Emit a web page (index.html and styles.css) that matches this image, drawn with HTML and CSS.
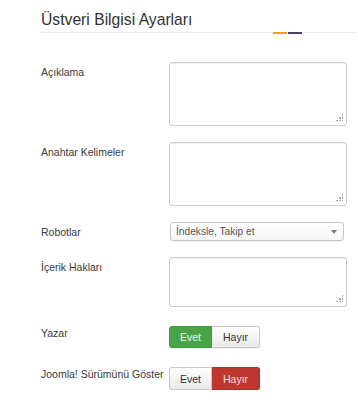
FILE: index.html
```html
<!DOCTYPE html>
<html lang="tr">
<head>
    <meta charset="UTF-8">
    <meta name="viewport" content="width=device-width, initial-scale=1.0">
    <title>Üstveri Bilgisi Ayarları</title>
    <link rel="stylesheet" href="styles.css">
</head>
<body>
    <div class="page">
        <h2 class="page-title">Üstveri Bilgisi Ayarları</h2>

        <div class="form">
            <label class="form-label" for="metaDesc">Açıklama</label>
            <div class="field">
                <textarea id="metaDesc" class="area area-tall"></textarea>
                <span class="grip"></span>
            </div>

            <label class="form-label" for="metaKeys">Anahtar Kelimeler</label>
            <div class="field">
                <textarea id="metaKeys" class="area area-tall"></textarea>
                <span class="grip"></span>
            </div>

            <label class="form-label" for="robots">Robotlar</label>
            <div class="field">
                <div class="select" id="robots">
                    <span>İndeksle, Takip et</span>
                    <span class="caret"></span>
                </div>
            </div>

            <label class="form-label" for="rights">İçerik Hakları</label>
            <div class="field">
                <textarea id="rights" class="area area-short"></textarea>
                <span class="grip"></span>
            </div>

            <span class="form-label">Yazar</span>
            <div class="field field-toggle">
                <div class="toggle">
                    <button class="btn btn-yes active">Evet</button>
                    <button class="btn btn-no">Hayır</button>
                </div>
            </div>

            <span class="form-label">Joomla! Sürümünü Göster</span>
            <div class="field field-toggle">
                <div class="toggle">
                    <button class="btn btn-yes">Evet</button>
                    <button class="btn btn-no active">Hayır</button>
                </div>
            </div>
        </div>
    </div>
</body>
</html>
```

FILE: styles.css
```css
body {
    margin: 0;
    background: #fff;
    font-family: "Liberation Sans", Arial, sans-serif;
    color: #333;
}

.page {
    padding: 0 3px 0 41px;
}

.page-title {
    position: relative;
    margin: 0;
    padding: 10px 0 2px;
    font-size: 15.7px;
    font-weight: normal;
    line-height: 20px;
    color: #333;
    border-bottom: 1px solid #e8e8e8;
}

/* the two small coloured marks on the rule */
.page-title::after {
    content: "";
    position: absolute;
    left: 232px;
    bottom: -2px;
    width: 29px;
    height: 2px;
    background: linear-gradient(to right, #f0a410 0, #f0a410 14px, #fff 14px, #fff 15px, #44446a 15px);
}

.form {
    display: grid;
    grid-template-columns: 128px 1fr;
    row-gap: 16px;
    margin-top: 29px;
}

.form-label {
    padding-top: 3px;
    font-size: 10.5px;
    line-height: 14px;
    color: #3a3a3a;
}

.field {
    position: relative;
}

.field-toggle {
    padding-top: 3px;
}

.area {
    display: block;
    box-sizing: border-box;
    width: 178px;
    margin: 0;
    border: 1px solid #ccc;
    border-radius: 3px;
    box-shadow: inset 0 1px 1px rgba(0,0,0,0.06);
    background: #fff;
    resize: none;
    outline: none;
}

.area-tall {
    height: 64px;
}

.area-short {
    height: 50px;
}

.grip {
    position: absolute;
    left: 167px;
    bottom: 5px;
    width: 7px;
    height: 7px;
    background:
        radial-gradient(circle, #aaa 0.8px, transparent 1px) 6px 0 / 2px 2px no-repeat,
        radial-gradient(circle, #aaa 0.8px, transparent 1px) 6px 3px / 2px 2px no-repeat,
        radial-gradient(circle, #aaa 0.8px, transparent 1px) 6px 6px / 2px 2px no-repeat,
        radial-gradient(circle, #aaa 0.8px, transparent 1px) 3px 3px / 2px 2px no-repeat,
        radial-gradient(circle, #aaa 0.8px, transparent 1px) 3px 6px / 2px 2px no-repeat,
        radial-gradient(circle, #aaa 0.8px, transparent 1px) 0 6px / 2px 2px no-repeat;
}

.select {
    box-sizing: border-box;
    display: flex;
    align-items: center;
    justify-content: space-between;
    width: 174px;
    height: 19px;
    margin-left: 1px;
    padding: 0 6px 0 5px;
    border: 1px solid #c6c6c6;
    border-radius: 3px;
    background: linear-gradient(#fff, #f6f6f6);
    box-shadow: 0 1px 1px rgba(0,0,0,0.05);
    font-size: 10.2px;
    color: #555;
}

.caret {
    width: 0;
    height: 0;
    border-left: 3px solid transparent;
    border-right: 3px solid transparent;
    border-top: 4px solid #777;
}

.toggle {
    display: flex;
}

.btn {
    box-sizing: border-box;
    height: 22px;
    margin: 0;
    padding: 0;
    border: 1px solid #c8c8c8;
    background: linear-gradient(#fff, #e9e9e9);
    font-family: "Liberation Sans", Arial, sans-serif;
    font-size: 10.5px;
    color: #333;
    box-shadow: 0 1px 1px rgba(0,0,0,0.06);
}

.btn-yes {
    width: 43px;
    border-radius: 3px 0 0 3px;
}

.btn-no {
    width: 48px;
    border-left: none;
    border-radius: 0 3px 3px 0;
}

.btn-yes.active {
    background: #47a447;
    border-color: #3f973f;
    color: #eaf5ea;
}

.btn-no.active {
    background: #bd362f;
    border-color: #ad2f29;
    color: #f6e0df;
}

.form > .field:last-child .btn {
    height: 23px;
}
```
